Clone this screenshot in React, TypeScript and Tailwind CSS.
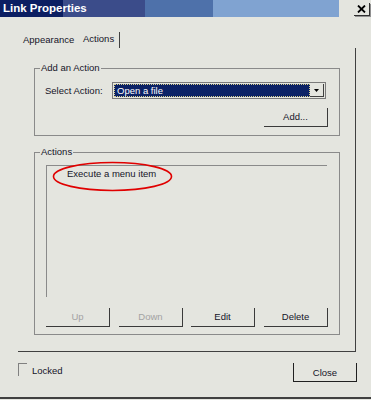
import React from 'react';

const BG = 'bg-[#e4e5df]';

function Btn({ label, disabled, className = '' }: { label: string; disabled?: boolean; className?: string }) {
  return (
    <div
      className={`w-[64px] h-[19px] shrink-0 flex items-center justify-center border-r border-b border-[#3a3a3a] ${
        disabled ? 'text-[#a3a3a3]' : 'text-[#141428]'
      } ${className}`}
    >
      {label}
    </div>
  );
}

function Group({ title, className = '', children }: { title: string; className?: string; children: React.ReactNode }) {
  return (
    <div className={`w-[306px] border border-[#8a8a8a] flex flex-col shrink-0 ${className}`}>
      <span className={`self-start h-[10px] -mt-[6px] ml-[5px] px-[1px] ${BG}`}>{title}</span>
      {children}
    </div>
  );
}

export default function App() {
  return (
    <div
      className={`w-[371px] h-[400px] overflow-hidden flex flex-col ${BG} text-[#141428] text-[9.5px] leading-none font-['Liberation_Sans',Arial,sans-serif]`}
    >
      {/* title bar */}
      <div className="flex h-[17px] shrink-0">
        <div className="w-[339px] flex items-center pl-[3px] bg-[linear-gradient(to_right,#0b1e62_0_63px,#3b4c8a_63px_145px,#4e71aa_145px_213px,#80a3d1_213px)]">
          <span className="text-white font-bold text-[11.5px]">Link Properties</span>
        </div>
        <div className="ml-[15px] mt-[3px] w-[16px] h-[13px] flex items-center justify-center border-r border-b border-[#303030] shadow-[1px_1px_0_#909090]">
          <svg width="9" height="8" viewBox="0 0 9 8">
            <path d="M1 0.5 L8 7.5 M8 0.5 L1 7.5" stroke="#000" strokeWidth="1.8" />
          </svg>
        </div>
      </div>

      {/* tabs */}
      <div className="flex h-[31px] shrink-0">
        <span className="ml-[23px] w-[60px] mt-[18px]">Appearance</span>
        <span className="w-[36px] mt-[17px]">Actions</span>
        <div className="mt-[15px] w-px h-[16px] bg-[#404040]" />
      </div>

      {/* panel */}
      <div className="ml-[18px] w-[338px] h-[304px] shrink-0 border-r border-b border-[#404040] flex flex-col pt-[20px] pl-[16px]">
        <Group title="Add an Action" className="h-[68px]">
          <div className="flex items-center mt-[9px] h-[17px]">
            <span className="ml-[10px] w-[67px]">Select Action:</span>
            <div className="w-[214px] h-[17px] flex border border-[#7a7a7a] p-px">
              <div className="flex-1 flex items-center bg-[#0c2266] border border-dotted border-[#d8cf8a] pl-[2px] text-white">
                Open a file
              </div>
              <div className="w-[14px] flex items-center justify-center border-r border-b border-[#404040]">
                <svg width="5" height="3" viewBox="0 0 5 3">
                  <path d="M0 0 H5 L2.5 3 Z" fill="#000" />
                </svg>
              </div>
            </div>
          </div>
          <Btn label="Add..." className="ml-[229px] mt-[9px]" />
        </Group>

        <Group title="Actions" className="h-[183px] mt-[16px]">
          <div className="relative ml-[11px] mt-[8px] w-[281px] h-[132px] border-t border-l border-[#8a8a8a] pl-[20px] pt-[3px]">
            <span>Execute a menu item</span>
            <svg className="absolute left-[5px] -top-[5px]" width="121" height="31" viewBox="0 0 121 31">
              <ellipse cx="60.5" cy="15.5" rx="59" ry="14" fill="none" stroke="#e00000" strokeWidth="1.6" />
            </svg>
          </div>
          <div className="flex mt-[11px]">
            <Btn label="Up" disabled className="ml-[11px]" />
            <Btn label="Down" disabled className="ml-[9px]" />
            <Btn label="Edit" className="ml-[8px]" />
            <Btn label="Delete" className="ml-[9px]" />
          </div>
        </Group>
      </div>

      {/* footer */}
      <div className="flex items-start mt-[11px] shrink-0">
        <div className="ml-[18px] w-[9px] h-[13px] border-t border-l border-[#808080]" />
        <span className="ml-[5px] mt-[3px]">Locked</span>
        <div className="ml-auto mr-[14px] w-[64px] h-[19px] flex items-center justify-center border-l border-r border-b border-[#202020] pt-[2px]">
          Close
        </div>
      </div>
      <div className="mt-auto mb-[1px] h-[2px] bg-[#404040] shrink-0" />
    </div>
  );
}
